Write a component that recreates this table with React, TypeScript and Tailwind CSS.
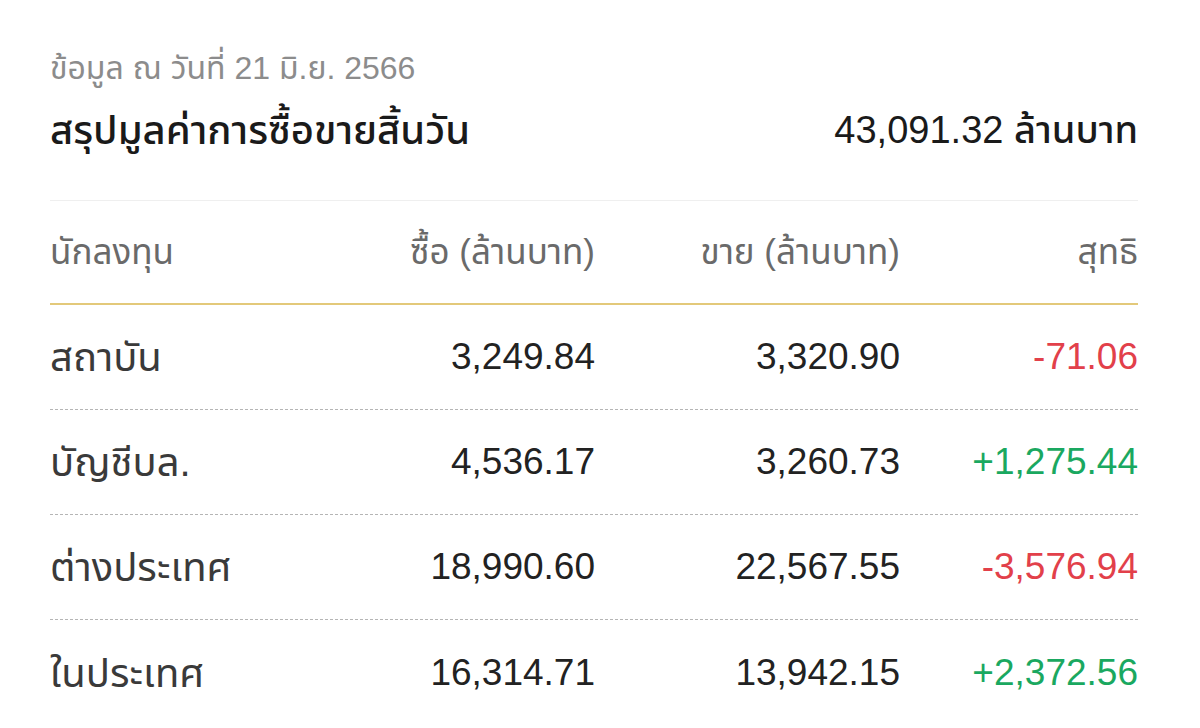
import React from "react";

const rows = [
  { name: "สถาบัน", buy: "3,249.84", sell: "3,320.90", net: "-71.06", pos: false },
  { name: "บัญชีบล.", buy: "4,536.17", sell: "3,260.73", net: "+1,275.44", pos: true },
  { name: "ต่างประเทศ", buy: "18,990.60", sell: "22,567.55", net: "-3,576.94", pos: false },
  { name: "ในประเทศ", buy: "16,314.71", sell: "13,942.15", net: "+2,372.56", pos: true },
];

const thai = "font-['Liberation_Sans','Noto_Sans_Thai','Noto_Sans',sans-serif]";

export default function App() {
  return (
    <div className={`w-[1200px] h-[728px] bg-white overflow-hidden ${thai}`}>
      <div className="ml-[50px] w-[1088px] pt-[48px]">
        <div className="text-[32px] leading-[40px] text-[#8c8c8c]">ข้อมูล ณ วันที่ 21 มิ.ย. 2566</div>
        <div className="mt-[18px] flex items-center justify-between">
          <div className="text-[40px] leading-[48px] font-medium text-[#1a1a1a]">สรุปมูลค่าการซื้อขายสิ้นวัน</div>
          <div className="text-[38px] leading-[48px] font-medium text-[#1a1a1a]">43,091.32 ล้านบาท</div>
        </div>
        <div className="mt-[46px] border-t border-[#efefef]" />
        <div className="grid grid-cols-[300px_245px_305px_238px] h-[104px] items-center border-b-2 border-[#e3c97a] text-[35px] text-[#6a6a6a]">
          <div>นักลงทุน</div>
          <div className="text-right">ซื้อ (ล้านบาท)</div>
          <div className="text-right">ขาย (ล้านบาท)</div>
          <div className="text-right">สุทธิ</div>
        </div>
        {rows.map((r, i) => (
          <div
            key={r.name}
            className={`grid grid-cols-[300px_245px_305px_238px] h-[105px] items-center text-[37px] text-[#222] ${
              i < rows.length - 1 ? "border-b border-dashed border-[#b5b5b5]" : ""
            }`}
          >
            <div className="text-[40px] text-[#3a3a3a]">{r.name}</div>
            <div className="text-right">{r.buy}</div>
            <div className="text-right">{r.sell}</div>
            <div className={`text-right ${r.pos ? "text-[#1aa860]" : "text-[#e2404a]"}`}>{r.net}</div>
          </div>
        ))}
      </div>
    </div>
  );
}
